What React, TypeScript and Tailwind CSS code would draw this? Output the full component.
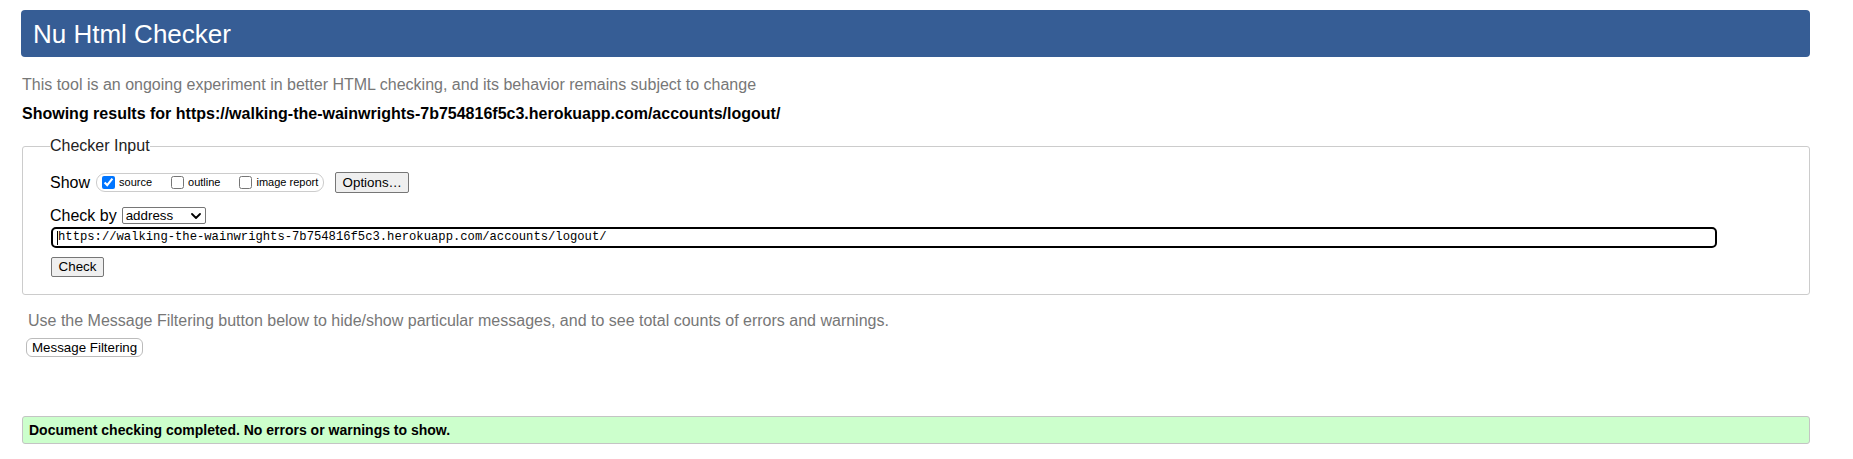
import React from "react";

const Checkbox = ({ checked, label }: { checked?: boolean; label: string }) => (
  <label className="flex items-center">
    <input
      type="checkbox"
      defaultChecked={checked}
      className="m-0 w-[13px] h-[13px]"
    />
    <span className="ml-[4px] text-[11px] leading-none text-black">{label}</span>
  </label>
);

const Button = ({ children, className }: { children: React.ReactNode; className?: string }) => (
  <button
    className={
      "flex items-center justify-center bg-[#efefef] border border-[#767676] rounded-[2px] text-[13.33px] leading-none text-black " +
      (className ?? "")
    }
  >
    {children}
  </button>
);

export default function App() {
  const url = "https://walking-the-wainwrights-7b754816f5c3.herokuapp.com/accounts/logout/";

  return (
    <div className="w-full h-[459px] bg-white font-['Liberation_Sans',Arial,sans-serif] overflow-hidden">
      <div className="ml-[21px] w-[1789px] pt-[10px]">
        <header className="h-[47px] bg-[#365d95] rounded-[4px] flex items-center pl-[12px]">
          <h1 className="text-[26px] leading-none text-white font-normal">Nu Html Checker</h1>
        </header>

        <p className="mt-[18px] pl-[1px] text-[16px] leading-5 text-[#777]">
          This tool is an ongoing experiment in better HTML checking, and its behavior remains subject to change
        </p>

        <p className="mt-[9px] pl-[1px] text-[16px] leading-5 font-bold text-black">
          Showing results for {url}
        </p>

        <fieldset className="mt-[12px] ml-[1px] w-[1788px] border border-[#ccc] rounded-[3px] pl-[27px] pt-[16px] pb-[17px]">
          <legend className="text-[16px] leading-5 text-[#222]">Checker Input</legend>

          <div className="flex items-center h-[21px]">
            <span className="text-[16px] text-black">Show</span>
            <div className="ml-[6px] flex items-center h-[19px] border border-[#ccc] rounded-[9px] pl-[5px] pr-[5px] gap-[19px]">
              <Checkbox checked label="source" />
              <Checkbox label="outline" />
              <Checkbox label="image report" />
            </div>
            <Button className="ml-[11px] w-[74px] h-[21px]">Options…</Button>
          </div>

          <div className="mt-[14px] flex items-center h-[17px]">
            <span className="text-[16px] text-black">Check by</span>
            <div className="ml-[5px] w-[84px] h-[17px] flex items-center justify-between border border-[#767676] rounded-[2px] bg-white pl-[3px] pr-[4px]">
              <span className="text-[13.33px] leading-none text-black">address</span>
              <svg width="10" height="6" viewBox="0 0 10 6" className="mt-[1px]">
                <path d="M1 1 L5 5 L9 1" fill="none" stroke="black" strokeWidth="1.8" strokeLinecap="round" strokeLinejoin="round" />
              </svg>
            </div>
          </div>

          <div className="mt-[3px] ml-[1px] w-[1666px] h-[21px] border-2 border-black rounded-[5px] flex items-center pl-[4px]">
            <span className="w-[1px] h-[14px] bg-black" />
            <span className="font-['Liberation_Mono',monospace] text-[12.2px] leading-none text-black">{url}</span>
          </div>

          <Button className="mt-[9px] ml-[1px] w-[53px] h-[20px]">Check</Button>
        </fieldset>

        <p className="mt-[16px] ml-[7px] text-[16px] leading-5 text-[#777]">
          Use the Message Filtering button below to hide/show particular messages, and to see total counts of errors and warnings.
        </p>

        <button className="mt-[7px] ml-[5px] h-[19px] px-[5px] flex items-center bg-white border border-[#bbb] rounded-[6px] text-[13.33px] leading-none text-black">
          Message Filtering
        </button>

        <div className="mt-[59px] ml-[1px] w-[1788px] h-[28px] flex items-center bg-[#ccffcc] border border-[#c4c4c4] rounded-[3px] pl-[6px]">
          <span className="text-[14px] font-bold text-black">
            Document checking completed. No errors or warnings to show.
          </span>
        </div>
      </div>
    </div>
  );
}
